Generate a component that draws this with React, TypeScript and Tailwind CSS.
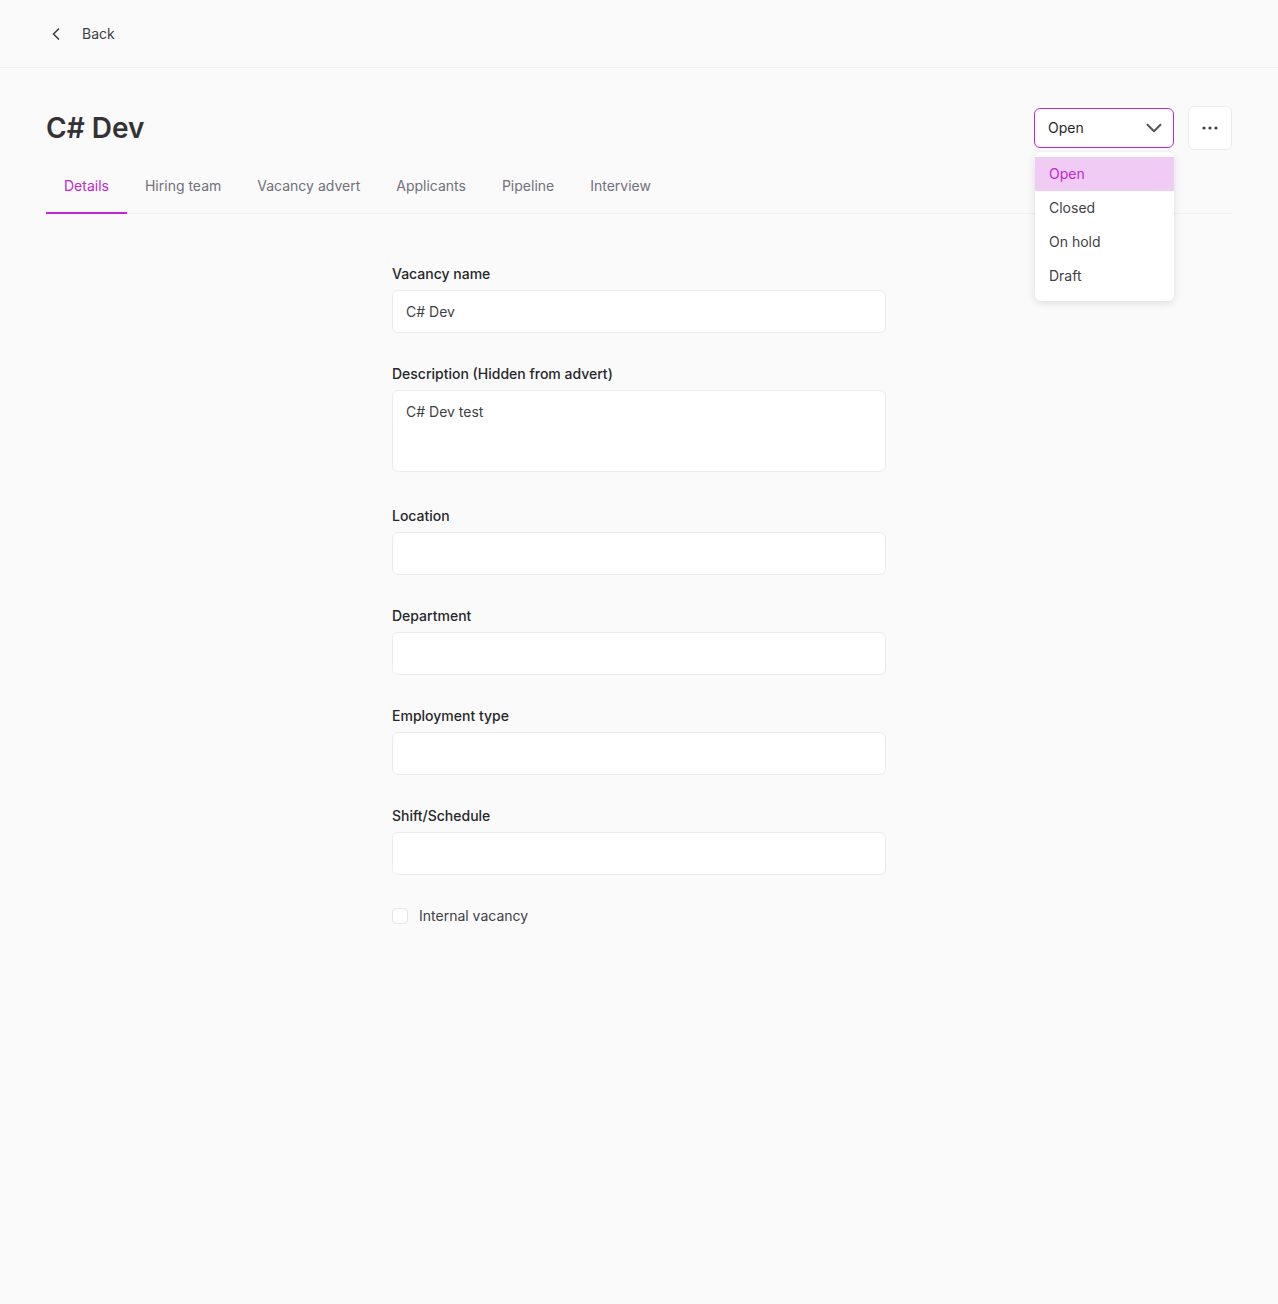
import { useState } from "react";
import { ChevronDown, ChevronLeft } from "lucide-react";

const fieldClasses =
  "block w-full rounded-md border border-[#ececec] bg-white px-[13px] text-sm text-[#3f3f46] outline-none";

const labelClasses = "block text-sm font-medium text-[#27272a] leading-5 mb-1.5";

const tabs = ["Details", "Hiring team", "Vacancy advert", "Applicants", "Pipeline", "Interview"];
const statuses = ["Open", "Closed", "On hold", "Draft"];

function TextField({ label, value = "" }: { label: string; value?: string }) {
  return (
    <div className="mb-[31px]">
      <label className={labelClasses}>{label}</label>
      <input type="text" defaultValue={value} className={`${fieldClasses} h-[43px]`} />
    </div>
  );
}

export default function App() {
  const [tab, setTab] = useState("Details");
  const [status, setStatus] = useState("Open");

  return (
    <main className="min-h-[1304px] bg-[#fafafa] font-['Inter',sans-serif] text-[#3f3f46]">
      {/* Top bar */}
      <header className="flex h-[68px] items-center border-b border-[#efefef] pl-[46px]">
        <button type="button" className="flex items-center gap-[16px] text-sm text-[#3f3f46]">
          <ChevronLeft className="h-5 w-5" strokeWidth={2} />
          <span>Back</span>
        </button>
      </header>

      <div className="px-[46px]">
        {/* Title row */}
        <div className="flex items-center justify-between pt-[38px]">
          <h1 className="text-[28px] font-semibold leading-[44px] text-[#333336]">C# Dev</h1>
          <div className="flex items-center gap-[14px]">
            <div className="relative">
              <button
                type="button"
                className="flex h-[40px] w-[140px] items-center justify-between rounded-md border border-[#c026d3] bg-white pl-[13px] pr-[6px] text-sm text-[#27272a]"
              >
                <span>{status}</span>
                <ChevronDown className="h-[26px] w-[26px] text-[#52525b]" strokeWidth={1.75} />
              </button>
              <ul className="absolute left-[1px] top-[44px] z-10 w-[139px] rounded-md bg-white pb-[8px] pt-[5px] shadow-[0_2px_8px_rgba(0,0,0,0.12)]">
                {statuses.map((s) => (
                  <li
                    key={s}
                    onClick={() => setStatus(s)}
                    className={`flex h-[34px] cursor-pointer items-center px-[14px] text-sm ${
                      s === status ? "bg-[#f0cbf3] text-[#c026d3]" : "text-[#3f3f46]"
                    }`}
                  >
                    {s}
                  </li>
                ))}
              </ul>
            </div>
            <button
              type="button"
              className="flex h-[44px] w-[44px] items-center justify-center rounded-md border border-[#ececec] bg-white"
            >
              <svg width="16" height="4" viewBox="0 0 16 4" fill="#3f3f46">
                <circle cx="2" cy="2" r="1.6" />
                <circle cx="8" cy="2" r="1.6" />
                <circle cx="14" cy="2" r="1.6" />
              </svg>
            </button>
          </div>
        </div>

        {/* Tabs */}
        <nav className="mt-[14px] flex border-b border-[#efefef]">
          {tabs.map((t) => (
            <button
              key={t}
              type="button"
              onClick={() => setTab(t)}
              className={`-mb-px h-[50px] border-b-2 px-[18px] pb-[4px] text-sm ${
                t === tab ? "border-[#c026d3] text-[#c026d3]" : "border-transparent text-[#71717a]"
              }`}
            >
              {t}
            </button>
          ))}
        </nav>

        {/* Details form */}
        <form className="mx-auto mt-[50px] w-[494px]">
          <TextField label="Vacancy name" value="C# Dev" />
          <div className="mb-[34px]">
            <label className={labelClasses}>Description (Hidden from advert)</label>
            <textarea
              defaultValue="C# Dev test"
              className={`${fieldClasses} h-[82px] resize-none py-[11px] leading-5`}
            />
          </div>
          <TextField label="Location" />
          <TextField label="Department" />
          <TextField label="Employment type" />
          <TextField label="Shift/Schedule" />
          <label className="flex items-center gap-[11px] text-sm text-[#3f3f46]">
            <span className="h-[16px] w-[16px] rounded-[4px] border border-[#e4e4e7] bg-white" />
            Internal vacancy
          </label>
        </form>
      </div>
    </main>
  );
}
